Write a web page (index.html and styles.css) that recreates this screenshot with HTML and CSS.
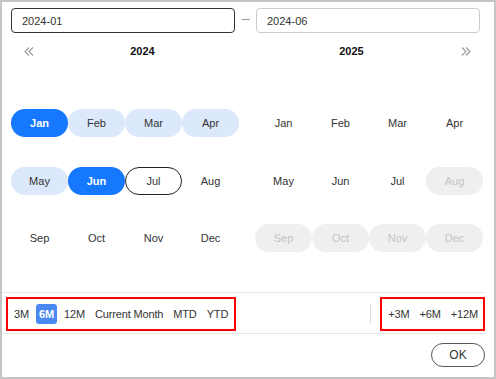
FILE: index.html
```html
<!DOCTYPE html>
<html lang="en">
<head>
    <meta charset="UTF-8">
    <meta name="viewport" content="width=device-width, initial-scale=1.0">
    <title>Month range picker</title>
    <link rel="stylesheet" href="styles.css">
</head>
<body>
    <div class="picker">
        <div class="inputs">
            <input type="text" class="range-input active" value="2024-01" readonly>
            <span class="sep"><span class="dash"></span></span>
            <input type="text" class="range-input" value="2024-06" readonly>
        </div>

        <div class="calendars">
            <div class="calendar">
                <div class="cal-header">
                    <button class="nav" aria-label="Previous year">
                        <svg width="10" height="9" viewBox="0 0 10 9"><path d="M5 0.5 L1 4.5 L5 8.5 M9 0.5 L5 4.5 L9 8.5" fill="none" stroke="#999" stroke-width="1.1"/></svg>
                    </button>
                    <div class="year">2024</div>
                </div>
                <div class="months">
                    <div class="month selected">Jan</div>
                    <div class="month in-range">Feb</div>
                    <div class="month in-range">Mar</div>
                    <div class="month in-range">Apr</div>
                    <div class="month in-range">May</div>
                    <div class="month selected">Jun</div>
                    <div class="month current">Jul</div>
                    <div class="month">Aug</div>
                    <div class="month">Sep</div>
                    <div class="month">Oct</div>
                    <div class="month">Nov</div>
                    <div class="month">Dec</div>
                </div>
            </div>
            <div class="calendar">
                <div class="cal-header">
                    <div class="year">2025</div>
                    <button class="nav" aria-label="Next year">
                        <svg width="10" height="9" viewBox="0 0 10 9"><path d="M1 0.5 L5 4.5 L1 8.5 M5 0.5 L9 4.5 L5 8.5" fill="none" stroke="#999" stroke-width="1.1"/></svg>
                    </button>
                </div>
                <div class="months">
                    <div class="month">Jan</div>
                    <div class="month">Feb</div>
                    <div class="month">Mar</div>
                    <div class="month">Apr</div>
                    <div class="month">May</div>
                    <div class="month">Jun</div>
                    <div class="month">Jul</div>
                    <div class="month disabled">Aug</div>
                    <div class="month disabled">Sep</div>
                    <div class="month disabled">Oct</div>
                    <div class="month disabled">Nov</div>
                    <div class="month disabled">Dec</div>
                </div>
            </div>
        </div>

        <div class="presets">
            <div class="preset-group">
                <span class="preset">3M</span>
                <span class="preset active">6M</span>
                <span class="preset">12M</span>
                <span class="preset">Current Month</span>
                <span class="preset">MTD</span>
                <span class="preset">YTD</span>
            </div>
            <span class="divider"></span>
            <div class="preset-group right">
                <span class="preset">+3M</span>
                <span class="preset">+6M</span>
                <span class="preset">+12M</span>
            </div>
        </div>

        <div class="actions">
            <button class="ok">OK</button>
        </div>
    </div>
</body>
</html>
```

FILE: styles.css
```css
* {
    box-sizing: border-box;
}

body {
    margin: 0;
    background-color: #fff;
    font-family: 'Liberation Sans', Arial, sans-serif;
    font-size: 11px;
    color: #333;
}

.picker {
    width: 496px;
    height: 379px;
    border: 2px solid #c4c4c4;
    padding: 6px 9px 0 9px;
    background-color: #fff;
}

.inputs {
    display: flex;
    align-items: center;
}

.range-input {
    width: 224px;
    height: 25px;
    padding: 0 10px;
    border: 1px solid #ccc;
    border-radius: 4px;
    font-family: inherit;
    font-size: 11px;
    color: #333;
    outline: none;
}

.range-input.active {
    border-color: #333;
}

.sep {
    width: 21px;
    display: flex;
    justify-content: center;
}

.dash {
    width: 8px;
    border-top: 1px solid #999;
    margin-top: -2px;
}

.calendars {
    display: grid;
    grid-template-columns: 228px 228px;
    column-gap: 16px;
    margin-top: 8px;
    height: 251px;
}

.cal-header {
    display: flex;
    align-items: center;
    height: 20px;
}

.nav {
    width: 35px;
    height: 20px;
    padding: 0;
    border: none;
    background: none;
    display: flex;
    align-items: center;
    justify-content: center;
    cursor: pointer;
}

.year {
    flex: 1;
    text-align: center;
    font-weight: bold;
    color: #111;
}

.months {
    display: grid;
    grid-template-columns: repeat(4, 57px);
    grid-auto-rows: 28px;
    row-gap: 29.5px;
    margin-top: 48px;
}

.month {
    display: flex;
    align-items: center;
    justify-content: center;
    border-radius: 14px;
    border: 1px solid transparent;
    color: #333;
}

.month.selected {
    background-color: #1677ff;
    color: #fff;
    font-weight: bold;
}

.month.in-range {
    background-color: #dce9fc;
}

.month.current {
    border-color: #222;
}

.month.disabled {
    background-color: #efefef;
    color: #c4c4c4;
}

.presets {
    display: flex;
    align-items: center;
    margin-left: -9px;
    width: 483px;
    padding: 4px 0 2px 4px;
    border-top: 1px solid #e6e6e6;
    border-bottom: 1px solid #e6e6e6;
}

.preset-group {
    display: flex;
    align-items: center;
    gap: 4px;
    padding: 5px 3px;
    border: 2px solid #f00;
}

.preset-group.right {
    padding-right: 2px;
    gap: 4px;
    margin-left: 9px;
}

.preset {
    height: 20px;
    line-height: 20px;
    padding: 0 3px;
    border-radius: 3px;
    color: #333;
    white-space: nowrap;
    letter-spacing: -0.15px;
}

.preset.active {
    background-color: #4a88f2;
    color: #fff;
    font-weight: bold;
}

.divider {
    margin-left: auto;
    width: 1px;
    height: 20px;
    background-color: #ddd;
}

.actions {
    display: flex;
    justify-content: flex-end;
    padding-top: 9px;
}

.ok {
    width: 54px;
    height: 24px;
    border: 1px solid #555;
    border-radius: 12px;
    background-color: #fff;
    font-family: inherit;
    font-size: 12px;
    color: #333;
    cursor: pointer;
}
```
